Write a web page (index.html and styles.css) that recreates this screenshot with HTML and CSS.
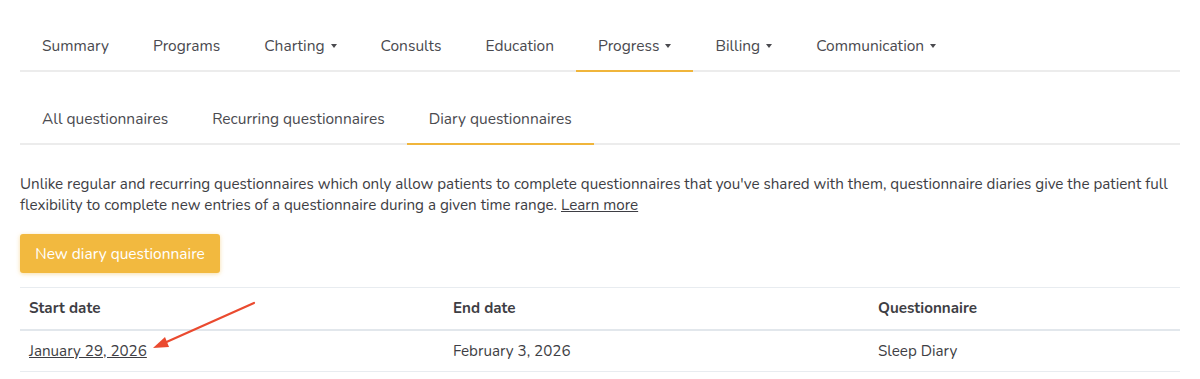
FILE: index.html
```html
<!DOCTYPE html>
<html>
<head>
<meta charset="utf-8">
<link rel="stylesheet" href="styles.css">
</head>
<body>
<div class="page">
  <nav class="tabs main-tabs">
    <a class="tab">Summary</a>
    <a class="tab">Programs</a>
    <a class="tab">Charting <span class="caret"></span></a>
    <a class="tab">Consults</a>
    <a class="tab">Education</a>
    <a class="tab active">Progress <span class="caret"></span></a>
    <a class="tab">Billing <span class="caret"></span></a>
    <a class="tab">Communication <span class="caret"></span></a>
  </nav>
  <nav class="tabs sub-tabs">
    <a class="tab">All questionnaires</a>
    <a class="tab">Recurring questionnaires</a>
    <a class="tab active">Diary questionnaires</a>
  </nav>
  <p class="intro">Unlike regular and recurring questionnaires which only allow patients to complete questionnaires that you've shared with them, questionnaire diaries give the patient full flexibility to complete new entries of a questionnaire during a given time range. <a class="link">Learn more</a></p>
  <button class="btn">New diary questionnaire</button>
  <div class="table-wrap">
    <table class="table">
      <thead>
        <tr><th class="c1">Start date</th><th class="c2">End date</th><th class="c3">Questionnaire</th></tr>
      </thead>
      <tbody>
        <tr><td><a class="link">January 29, 2026</a></td><td>February 3, 2026</td><td>Sleep Diary</td></tr>
      </tbody>
    </table>
    <svg class="arrow" width="120" height="60" viewBox="0 0 120 60">
      <line x1="114" y1="4" x2="22" y2="45" stroke="#ea4a2f" stroke-width="2.2" stroke-linecap="round"/>
      <polygon points="13,49 25,38 29,48" fill="#ea4a2f"/>
    </svg>
  </div>
</div>
</body>
</html>
```
FILE: styles.css
```css
* { box-sizing: border-box; }
body {
  margin: 0;
  background: #fff;
  font-family: "Nunito", "Lato", "Open Sans", sans-serif;
  color: #4a4a4f;
}
.page {
  padding: 0 20px;
}
.tabs {
  display: flex;
  border-bottom: 2px solid #ececec;
}
.main-tabs {
  padding-top: 24px;
}
.tab {
  display: block;
  padding: 12px 22px 14px;
  font-size: 15.5px;
  line-height: 20px;
  color: #4a4a4f;
  margin-bottom: -2px;
  border-bottom: 2px solid transparent;
  white-space: nowrap;
}
.tab.active {
  border-bottom-color: #f0b53b;
}
.caret {
  display: inline-block;
  width: 0;
  height: 0;
  border-left: 3.5px solid transparent;
  border-right: 3.5px solid transparent;
  border-top: 4px solid #4a4a4f;
  vertical-align: middle;
  margin-left: 2px;
  margin-top: -2px;
}
.sub-tabs {
  margin-top: 25px;
}
.intro {
  margin: 29px 0 0;
  font-size: 15.2px;
  line-height: 21px;
  color: #3e3e44;
}
.link {
  color: #3e3e44;
  text-decoration: underline;
}
.btn {
  margin-top: 18px;
  display: block;
  height: 39px;
  width: 200px;
  background: #f2b93f;
  border: none;
  border-radius: 3px;
  color: #fff;
  font-family: inherit;
  font-size: 15.5px;
  box-shadow: 0 1px 4px rgba(240, 181, 59, 0.45);
}
.table-wrap {
  position: relative;
  margin-top: 14px;
}
.table {
  width: 100%;
  border-collapse: collapse;
  font-size: 15.2px;
}
.table th, .table td {
  text-align: left;
  padding: 0 9px;
  height: 42px;
  color: #3e3e44;
}
.table th {
  font-weight: 700;
  border-top: 1px solid #e8ecf0;
  border-bottom: 2px solid #e2e7ec;
}
.table td {
  border-bottom: 1px solid #e8ecf0;
}
.c1 { width: 424px; }
.c2 { width: 425px; }
.arrow {
  position: absolute;
  left: 120px;
  top: 12px;
}
```
